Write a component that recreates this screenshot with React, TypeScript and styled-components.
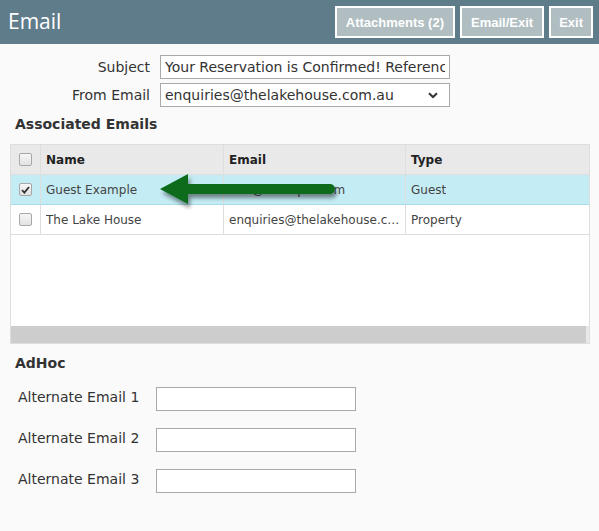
import React from 'react';
import styled, { createGlobalStyle } from 'styled-components';

const GlobalStyle = createGlobalStyle`
  html, body {
    margin: 0;
    padding: 0;
    background: #fafafa;
  }
  body {
    font-family: "DejaVu Sans", Verdana, sans-serif;
    color: #333;
  }
`;

const Page = styled.div`
  width: 599px;
  min-height: 531px;
  background: #fafafa;
`;

const TopBar = styled.header`
  height: 44px;
  background: #5f7c8a;
  display: flex;
  align-items: center;
  justify-content: space-between;
  padding: 0 6px 0 8px;
  box-sizing: border-box;
`;

const Title = styled.h1`
  margin: 0;
  font-family: "Open Sans", "Liberation Sans", sans-serif;
  font-size: 21px;
  font-weight: 400;
  color: #fff;
  line-height: 1;
  padding-bottom: 2px;
`;

const ButtonGroup = styled.div`
  display: flex;
  gap: 5px;
`;

const BarButton = styled.button<{ $pad?: number }>`
  height: 32px;
  padding: 0 ${(p) => p.$pad ?? 9}px;
  border: 2px solid #fff;
  background: #b0bec1;
  color: #fff;
  font-family: "Liberation Sans", Arial, sans-serif;
  font-size: 13px;
  font-weight: 700;
  cursor: pointer;
`;

const FieldGrid = styled.div`
  display: grid;
  grid-template-columns: 150px 290px;
  column-gap: 10px;
  row-gap: 4px;
  padding-top: 11px;
`;

const FieldLabel = styled.label`
  text-align: right;
  font-size: 14px;
  line-height: 24px;
  color: #333;
`;

const TextBox = styled.input<{ $w: number }>`
  box-sizing: border-box;
  width: ${(p) => p.$w}px;
  height: 24px;
  border: 1px solid #a9a9a9;
  background: #fff;
  padding: 0 4px;
  font-family: "DejaVu Sans", Verdana, sans-serif;
  font-size: 14px;
  color: #333;
  outline: none;
`;

const SelectBox = styled.div`
  box-sizing: border-box;
  width: 290px;
  height: 24px;
  border: 1px solid #a9a9a9;
  background: #fff;
  padding: 0 11px 0 4px;
  display: flex;
  align-items: center;
  justify-content: space-between;
  font-size: 14px;
  color: #333;
`;

const SectionTitle = styled.h2<{ $pad: string }>`
  margin: 0;
  font-size: 14px;
  line-height: 18px;
  font-weight: 700;
  color: #333;
  padding: ${(p) => p.$pad};
`;

const GridBox = styled.div`
  position: relative;
  margin: 0 9px 0 10px;
  height: 200px;
  box-sizing: border-box;
  border: 1px solid #dedede;
  background: #fff;
  display: flex;
  flex-direction: column;
`;

const GridRow = styled.div<{ $kind: 'head' | 'selected' | 'plain' }>`
  display: grid;
  grid-template-columns: 30px 183px 182px 1fr;
  height: 30px;
  flex-shrink: 0;
  box-sizing: border-box;
  border-bottom: 1px solid ${(p) => (p.$kind === 'selected' ? '#a9dbe6' : '#dedede')};
  background: ${(p) =>
    p.$kind === 'head' ? '#e9e9e9' : p.$kind === 'selected' ? '#c4ecf4' : '#fff'};
  font-size: 12px;
  font-weight: ${(p) => (p.$kind === 'head' ? 700 : 400)};
  color: ${(p) => (p.$kind === 'head' ? '#222' : '#444')};
`;

const Cell = styled.div`
  display: flex;
  align-items: center;
  padding: 0 5px;
  border-right: 1px solid #dedede;
  white-space: nowrap;
  overflow: hidden;
  min-width: 0;
  &:last-child {
    border-right: none;
  }
`;

const CellText = styled.span`
  overflow: hidden;
  text-overflow: ellipsis;
`;

const CheckCell = styled(Cell)`
  justify-content: center;
  padding: 0;
`;

const CheckBox = styled.span`
  box-sizing: border-box;
  width: 13px;
  height: 13px;
  border: 1px solid #a8a8a8;
  border-radius: 2px;
  background: linear-gradient(#f6f6f6, #e2e2e2);
  display: flex;
  align-items: center;
  justify-content: center;
`;

const GridFill = styled.div`
  flex: 1;
  background: #fff;
`;

const ScrollTrack = styled.div`
  height: 17px;
  flex-shrink: 0;
  background: #e8e8e8;
  display: flex;
`;

const ScrollThumb = styled.div`
  flex: 1;
  margin-right: 3px;
  background: #cdcdcd;
`;

const ArrowLayer = styled.svg`
  position: absolute;
  left: 139px;
  top: 20px;
  overflow: visible;
  pointer-events: none;
`;

const AdHocList = styled.div`
  display: flex;
  flex-direction: column;
  gap: 17px;
  padding: 15px 0 0 18px;
`;

const AdHocRow = styled.div`
  display: flex;
  align-items: flex-start;
`;

const AdHocLabel = styled.label`
  width: 138px;
  font-size: 14px;
  line-height: 20px;
  color: #333;
`;

const Chevron = () => (
  <svg width="10" height="7" viewBox="0 0 10 7">
    <path d="M1 1.2 L5 5 L9 1.2" fill="none" stroke="#333" strokeWidth="2" />
  </svg>
);

const Tick = () => (
  <svg width="9" height="8" viewBox="0 0 9 8">
    <path d="M1 4.2 L3.4 6.6 L8 1" fill="none" stroke="#333" strokeWidth="1.8" />
  </svg>
);

const contacts = [
  { name: 'Guest Example', email: 'test@example.com', type: 'Guest', checked: true },
  { name: 'The Lake House', email: 'enquiries@thelakehouse.com.au', type: 'Property', checked: false },
];

export default function App() {
  return (
    <Page>
      <GlobalStyle />
      <TopBar>
        <Title>Email</Title>
        <ButtonGroup>
          <BarButton>Attachments (2)</BarButton>
          <BarButton>Email/Exit</BarButton>
          <BarButton $pad={8}>Exit</BarButton>
        </ButtonGroup>
      </TopBar>

      <FieldGrid>
        <FieldLabel>Subject</FieldLabel>
        <TextBox $w={290} readOnly value="Your Reservation is Confirmed! Reference #10452" />
        <FieldLabel>From Email</FieldLabel>
        <SelectBox>
          <span>enquiries@thelakehouse.com.au</span>
          <Chevron />
        </SelectBox>
      </FieldGrid>

      <SectionTitle $pad="8px 15px 11px">Associated Emails</SectionTitle>

      <GridBox>
        <GridRow $kind="head">
          <CheckCell>
            <CheckBox />
          </CheckCell>
          <Cell>Name</Cell>
          <Cell>Email</Cell>
          <Cell>Type</Cell>
        </GridRow>
        {contacts.map((c) => (
          <GridRow key={c.name} $kind={c.checked ? 'selected' : 'plain'}>
            <CheckCell>
              <CheckBox>{c.checked && <Tick />}</CheckBox>
            </CheckCell>
            <Cell>
              <CellText>{c.name}</CellText>
            </Cell>
            <Cell>
              <CellText>{c.email}</CellText>
            </Cell>
            <Cell>
              <CellText>{c.type}</CellText>
            </Cell>
          </GridRow>
        ))}
        <GridFill />
        <ScrollTrack>
          <ScrollThumb />
        </ScrollTrack>

        <ArrowLayer width="200" height="50" viewBox="0 0 200 50">
          <defs>
            <filter id="arrowShadow" x="-10%" y="-40%" width="130%" height="200%">
              <feGaussianBlur in="SourceAlpha" stdDeviation="2" />
              <feOffset dx="2" dy="4" result="blur" />
              <feComponentTransfer>
                <feFuncA type="linear" slope="0.45" />
              </feComponentTransfer>
              <feMerge>
                <feMergeNode />
                <feMergeNode in="SourceGraphic" />
              </feMerge>
            </filter>
          </defs>
          <path
            d="M10 24 L38 9 L38 19 L180 19 A5 5 0 0 1 180 29 L38 29 L38 39 Z"
            fill="#0e6c1d"
            filter="url(#arrowShadow)"
          />
        </ArrowLayer>
      </GridBox>

      <SectionTitle $pad="10px 15px 0">AdHoc</SectionTitle>
      <AdHocList>
        {[1, 2, 3].map((n) => (
          <AdHocRow key={n}>
            <AdHocLabel>Alternate Email {n}</AdHocLabel>
            <TextBox $w={200} />
          </AdHocRow>
        ))}
      </AdHocList>
    </Page>
  );
}
